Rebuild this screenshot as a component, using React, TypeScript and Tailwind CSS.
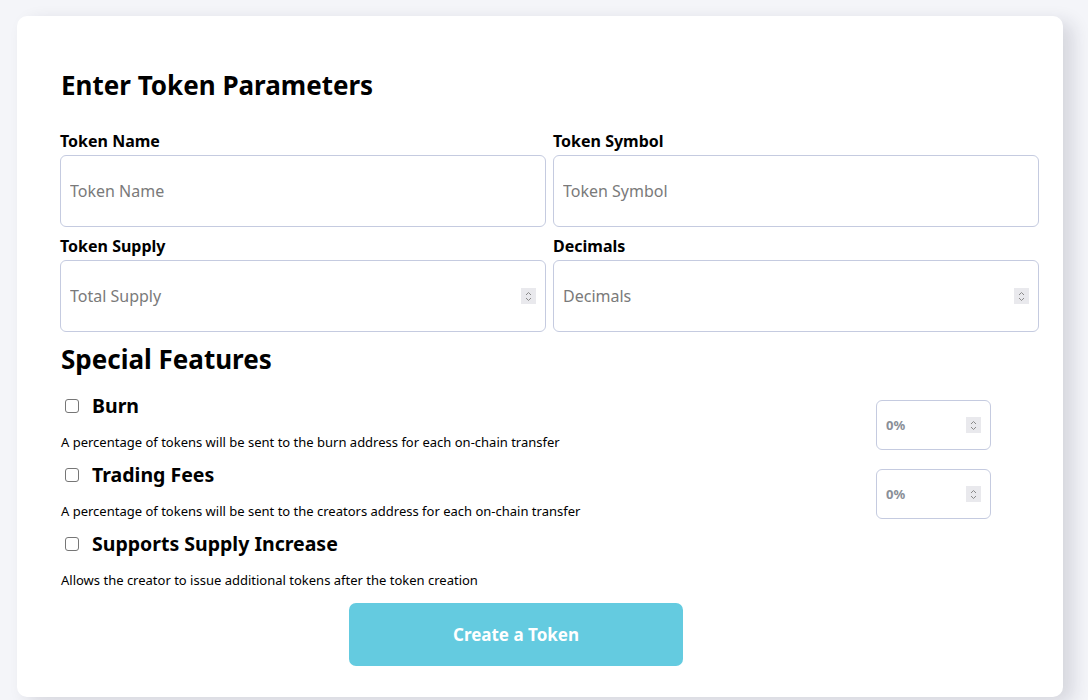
import { useState } from 'react';

const font = { fontFamily: '"Noto Sans", "Open Sans", sans-serif' };

function Spinner() {
  return (
    <span className="pointer-events-none absolute right-[10px] top-1/2 flex h-[16px] w-[15px] -translate-y-1/2 items-center justify-center bg-[#e9e9ed]">
      <svg width="7" height="11" viewBox="0 0 7 11" fill="none" stroke="#8a8a8a" strokeWidth="1">
        <path d="M1 4 L3.5 1.5 L6 4" />
        <path d="M1 7 L3.5 9.5 L6 7" />
      </svg>
    </span>
  );
}

interface FieldProps {
  label: string;
  placeholder: string;
  number?: boolean;
}

function Field({ label, placeholder, number }: FieldProps) {
  return (
    <label className="flex flex-col">
      <span className="mb-[5px] h-[18px] text-[16px] font-bold leading-[18px] text-black">{label}</span>
      <span className="relative block">
        <input
          type="text"
          placeholder={placeholder}
          className="h-[72px] w-full rounded-[6px] border border-[#c5cbe0] bg-white px-[9px] text-[16px] text-black outline-none placeholder:text-[#7a7a7a]"
        />
        {number ? <Spinner /> : null}
      </span>
    </label>
  );
}

interface FeatureProps {
  title: string;
  description: string;
  percent?: boolean;
}

function Feature({ title, description, percent }: FeatureProps) {
  const [checked, setChecked] = useState(false);
  return (
    <div className="flex h-[69px] items-start justify-between">
      <div>
        <label className="flex h-[20px] items-center">
          <span
            onClick={() => setChecked(!checked)}
            className={`ml-[4px] mr-[13px] block h-[14px] w-[14px] rounded-[3px] border border-[#767676] ${checked ? 'bg-[#0075ff]' : 'bg-white'}`}
          />
          <span className="text-[19.5px] font-bold leading-[20px] text-black">{title}</span>
        </label>
        <p className="mt-[18px] text-[13px] leading-[17px] text-black">{description}</p>
      </div>
      {percent ? (
        <div className="relative mr-[48px] mt-[4px]">
          <input
            type="text"
            placeholder="0%"
            className="h-[50px] w-[115px] rounded-[6px] border border-[#c5cbe0] bg-white px-[9px] text-[13px] font-bold text-black outline-none placeholder:text-[#8a8f98]"
          />
          <Spinner />
        </div>
      ) : null}
    </div>
  );
}

export default function App() {
  return (
    <div className="min-h-[700px] bg-[#f4f5f9] pl-[17px] pr-[25px] pt-[16px]" style={font}>
      <div className="h-[681px] rounded-[10px] bg-white pl-[44px] pr-[24px] pt-[51px] shadow-[10px_6px_18px_rgba(30,30,60,0.14)]">
        <h1 className="mb-[29px] text-[26px] font-bold leading-[36px] text-black">Enter Token Parameters</h1>
        <div className="ml-[-1px] grid grid-cols-2 gap-x-[7px] gap-y-[10px]">
          <Field label="Token Name" placeholder="Token Name" />
          <Field label="Token Symbol" placeholder="Token Symbol" />
          <Field label="Token Supply" placeholder="Total Supply" number />
          <Field label="Decimals" placeholder="Decimals" number />
        </div>
        <h2 className="mt-[9px] mb-[19px] text-[26px] font-bold leading-[36px] text-black">Special Features</h2>
        <Feature
          title="Burn"
          description="A percentage of tokens will be sent to the burn address for each on-chain transfer"
          percent
        />
        <Feature
          title="Trading Fees"
          description="A percentage of tokens will be sent to the creators address for each on-chain transfer"
          percent
        />
        <Feature
          title="Supports Supply Increase"
          description="Allows the creator to issue additional tokens after the token creation"
        />
        <div className="flex justify-center pr-[68px]">
          <button
            type="button"
            className="h-[63px] w-[334px] rounded-[7px] bg-[#64cbe0] text-[17px] font-bold text-white"
          >
            Create a Token
          </button>
        </div>
      </div>
    </div>
  );
}
